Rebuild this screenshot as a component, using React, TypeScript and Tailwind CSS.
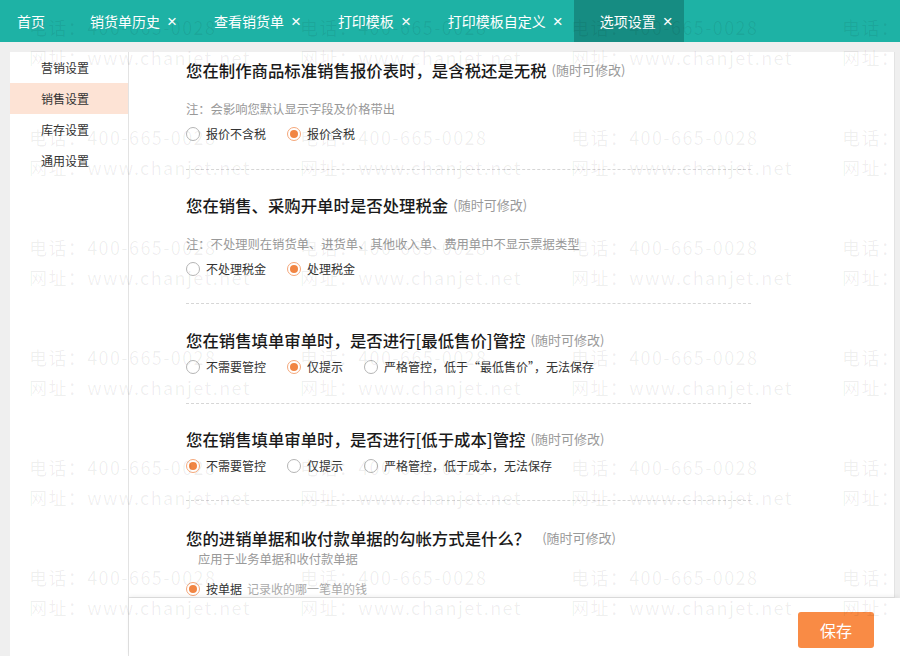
import React from "react";

const FONT = '"Noto Sans CJK SC", "Noto Sans", sans-serif';

type Tab = { label: string; close: boolean; active?: boolean; first?: boolean };

const tabs: Tab[] = [
  { label: "首页", close: false, first: true },
  { label: "销货单历史", close: true },
  { label: "查看销货单", close: true },
  { label: "打印模板", close: true },
  { label: "打印模板自定义", close: true },
  { label: "选项设置", close: true, active: true },
];

function Radio({ checked, label, extra }: { checked?: boolean; label: string; extra?: string }) {
  return (
    <div className="flex items-center mr-[21px]">
      {checked ? (
        <span className="w-[14px] h-[14px] rounded-full border border-[#f5a77a] bg-white flex items-center justify-center">
          <span className="w-[8px] h-[8px] rounded-full bg-[#f18543]" />
        </span>
      ) : (
        <span className="w-[14px] h-[14px] rounded-full border border-[#b5b5b5] bg-white" />
      )}
      <span className="ml-[6px] text-[12px] leading-[20px] text-[#333]">{label}</span>
      {extra && <span className="ml-[5px] text-[12px] leading-[20px] text-[#aaa]">{extra}</span>}
    </div>
  );
}

function Title({ text, wide }: { text: string; wide?: boolean }) {
  return (
    <div className="flex items-center h-[24px]">
      <span className="text-[16.4px] leading-[24px] text-[#1a1a1a] font-medium">{text}</span>
      <span className={`${wide ? "ml-[12px]" : "ml-[5px]"} text-[13px] text-[#999]`}>(随时可修改)</span>
    </div>
  );
}

function Dash() {
  return <div className="w-[565px] border-t border-dashed border-[#d6d6d6]" />;
}

function Watermark() {
  const rows = [0, 1, 2, 3, 4, 5];
  const cols = [0, 1, 2, 3];
  return (
    <div className="absolute inset-0 pointer-events-none overflow-hidden">
      <div className="absolute left-[29px] top-[15px] flex flex-col gap-[56px]">
        {rows.map((r) => (
          <div key={r} className="flex gap-[71px]">
            {cols.map((c) => (
              <div
                key={c}
                className="w-[200px] flex flex-col text-[18px] leading-[24px] tracking-[1.4px] text-[rgba(0,0,0,0.065)] whitespace-nowrap gap-[6px]"
              >
                <span>电话：400-665-0028</span>
                <span>网址：www.chanjet.net</span>
              </div>
            ))}
          </div>
        ))}
      </div>
    </div>
  );
}

export default function App() {
  return (
    <div
      className="relative w-[900px] h-[656px] overflow-hidden bg-[#efefef] flex flex-col"
      style={{ fontFamily: FONT }}
    >
      {/* Tab bar */}
      <div className="h-[42px] bg-[#1eb2a5] flex items-stretch shrink-0">
        {tabs.map((t) => (
          <div
            key={t.label}
            className={`flex items-center text-white text-[14px] ${
              t.first ? "pl-[17px] pr-[19px]" : "pl-[26px] pr-[11px]"
            } ${t.active ? "bg-[#168c82]" : ""}`}
          >
            <span>{t.label}</span>
            {t.close && (
              <span
                className="ml-[7px] text-[17px] leading-none font-light"
                style={{ fontFamily: '"Liberation Sans", Arial, sans-serif' }}
              >
                ×
              </span>
            )}
          </div>
        ))}
      </div>

      {/* Body */}
      <div className="flex-1 flex pt-[10px] pl-[10px] min-h-0">
        {/* Sidebar */}
        <div className="w-[119px] bg-white border-r border-[#e3e3e3] flex flex-col text-[12px] text-[#333] shrink-0">
          <div className="h-[31px] pl-[31px] flex items-center">营销设置</div>
          <div className="h-[31px] pl-[31px] flex items-center bg-[#fde3d5]">销售设置</div>
          <div className="h-[31px] pl-[31px] flex items-center">库存设置</div>
          <div className="h-[31px] pl-[31px] flex items-center">通用设置</div>
        </div>

        {/* Right column */}
        <div className="flex-1 flex flex-col min-w-0">
          <div className="flex-1 pr-[5px] min-h-0">
            <div className="h-full bg-white border-r border-b border-[#e3e3e3] pl-[57px] pt-[6px] flex flex-col">
              <Title text="您在制作商品标准销售报价表时，是含税还是无税" />
              <div className="mt-[18px] text-[12.3px] leading-[18px] text-[#999]">注：会影响您默认显示字段及价格带出</div>
              <div className="mt-[6px] flex">
                <Radio label="报价不含税" />
                <Radio checked label="报价含税" />
              </div>
              <div className="mt-[25px]"><Dash /></div>

              <div className="mt-[23px]"><Title text="您在销售、采购开单时是否处理税金" /></div>
              <div className="mt-[18px] text-[12.3px] leading-[18px] text-[#999]">注：不处理则在销货单、进货单、其他收入单、费用单中不显示票据类型</div>
              <div className="mt-[6px] flex">
                <Radio label="不处理税金" />
                <Radio checked label="处理税金" />
              </div>
              <div className="mt-[24px]"><Dash /></div>

              <div className="mt-[24px]"><Title text="您在销售填单审单时，是否进行[最低售价]管控" /></div>
              <div className="mt-[5px] flex">
                <Radio label="不需要管控" />
                <Radio checked label="仅提示" />
                <Radio label="严格管控，低于“最低售价”，无法保存" />
              </div>
              <div className="mt-[26px]"><Dash /></div>

              <div className="mt-[23px]"><Title text="您在销售填单审单时，是否进行[低于成本]管控" /></div>
              <div className="mt-[5px] flex">
                <Radio checked label="不需要管控" />
                <Radio label="仅提示" />
                <Radio label="严格管控，低于成本，无法保存" />
              </div>
              <div className="mt-[24px]"><Dash /></div>

              <div className="mt-[25px]"><Title wide text="您的进销单据和收付款单据的勾帐方式是什么？" /></div>
              <div className="pl-[12px] text-[12.3px] leading-[18px] text-[#999]">应用于业务单据和收付款单据</div>
              <div className="mt-[11px] flex">
                <Radio checked label="按单据" extra="记录收的哪一笔单的钱" />
              </div>
            </div>
          </div>

          {/* Footer */}
          <div className="h-[58px] bg-white shrink-0 flex items-start justify-end pt-[14px] pr-[26px] shadow-[0_-2px_4px_rgba(0,0,0,0.06)] relative">
            <button className="w-[76px] h-[36px] rounded-[3px] bg-[#f98b45] text-white text-[16px]">保存</button>
          </div>
        </div>
      </div>

      <Watermark />
    </div>
  );
}
